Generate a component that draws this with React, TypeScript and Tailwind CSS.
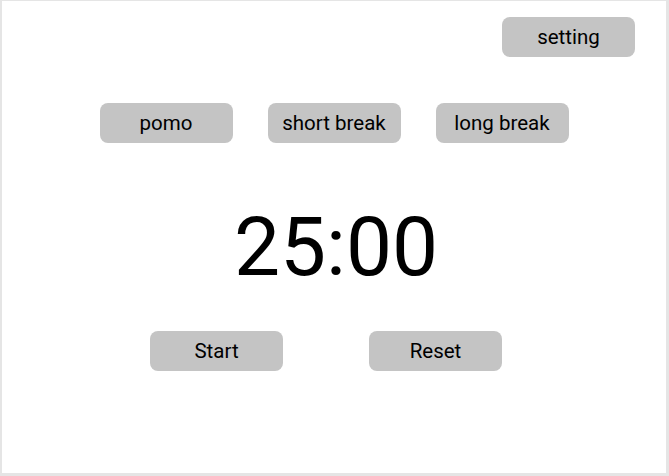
const Pill = ({ label }: { label: string }) => {
  return (
    <button className="flex h-10 w-[133px] items-center justify-center rounded-lg bg-[#c4c4c4] text-[20.5px] leading-none text-black">
      {label}
    </button>
  );
};

export default function App() {
  return (
    <div
      className="box-border flex h-[476px] w-full flex-col border-b-[3px] border-l-2 border-r-[3px] border-t border-[#e5e5e5] bg-white"
      style={{ fontFamily: 'Roboto, "Liberation Sans", sans-serif' }}
    >
      <div className="mt-4 flex justify-end pr-[31px]">
        <Pill label="setting" />
      </div>

      <div className="mt-[46px] flex justify-center gap-[35px]">
        <Pill label="pomo" />
        <Pill label="short break" />
        <Pill label="long break" />
      </div>

      <div className="mt-[63px] flex justify-center pl-1">
        <p className="text-[82px] leading-none text-black">25:00</p>
      </div>

      <div className="mt-[43px] flex justify-center gap-[86px] pr-4">
        <Pill label="Start" />
        <Pill label="Reset" />
      </div>
    </div>
  );
}
